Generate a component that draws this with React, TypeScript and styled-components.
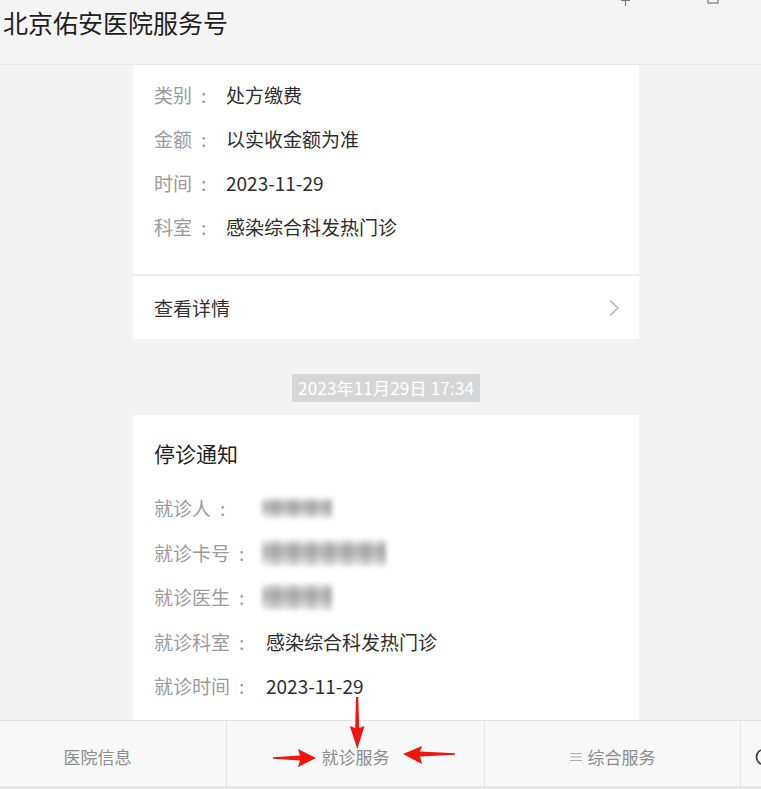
import React from "react";
import styled, { createGlobalStyle } from "styled-components";

const Global = createGlobalStyle`
  html, body { margin: 0; padding: 0; background: #f3f3f3; overflow: hidden; }
  body { font-family: "Noto Sans CJK SC", "Noto Sans", sans-serif; }
  * { box-sizing: border-box; }
`;

const Page = styled.div`
  position: relative;
  width: 761px;
  height: 789px;
  display: flex;
  flex-direction: column;
  background: #f3f3f3;
  overflow: hidden;
`;

const Header = styled.header`
  position: relative;
  flex: 0 0 65px;
  background: #f4f4f4;
  border-bottom: 1px solid #e8e8e8;
  padding-left: 3px;
`;

const Title = styled.h1`
  margin: 0;
  font-size: 25px;
  font-weight: 400;
  line-height: 44px;
  color: #1e1e1e;
`;

const WinIcons = styled.svg`
  position: absolute;
  top: 0;
  right: 20px;
`;

const Content = styled.main`
  flex: 1;
  overflow: hidden;
  display: flex;
  flex-direction: column;
  align-items: flex-start;
  padding-left: 133px;
`;

const Card = styled.section<{ $pad: string }>`
  width: 506px;
  background: #fff;
  padding: ${(p) => p.$pad};
  flex-shrink: 0;
`;

const FieldList = styled.div<{ $pad: string }>`
  padding: ${(p) => p.$pad};
`;

const Field = styled.div<{ $lh: number; $label: number }>`
  display: grid;
  grid-template-columns: ${(p) => p.$label}px 1fr;
  align-items: center;
  height: ${(p) => p.$lh}px;
  line-height: ${(p) => p.$lh}px;
  font-size: 19px;
`;

const Label = styled.span`
  color: #9b9b9b;
  white-space: nowrap;
`;

const Colon = styled.span`
  margin-left: 9px;
`;

const Value = styled.span`
  color: #2e2e2e;
  white-space: nowrap;
`;

const Divider = styled.div`
  height: 2px;
  background: #ececec;
`;

const DetailRow = styled.div`
  height: 63px;
  display: flex;
  align-items: center;
  justify-content: space-between;
  padding: 0 19px 0 21px;
  font-size: 19px;
  color: #333;
`;

const Stamp = styled.div`
  align-self: flex-start;
  margin: 35px 0 13px 159px;
  height: 28px;
  padding: 0 6px;
  background: #d6d6d6;
  color: #fff;
  font-size: 17px;
  line-height: 28px;
  letter-spacing: 0.2px;
  border-radius: 2px;
  flex-shrink: 0;
`;

const NoticeTitle = styled.h2`
  margin: 0 0 17px;
  font-size: 21px;
  font-weight: 400;
  line-height: 32px;
  color: #1f1f1f;
`;

const Blur = styled.div<{ $w: number; $h: number }>`
  width: ${(p) => p.$w}px;
  height: ${(p) => p.$h}px;
  margin-left: -4px;
  filter: blur(2.4px);
  background:
    repeating-linear-gradient(90deg, rgba(0,0,0,0.0) 0 9px, rgba(0,0,0,0.08) 9px 18px),
    linear-gradient(180deg, #ececec 0%, #b3b3b3 35%, #bdbdbd 60%, #ededed 100%);
  border-radius: 2px;
`;

const TabBar = styled.nav`
  flex: 0 0 69px;
  display: flex;
  margin-left: -31px;
  background: #f8f8f8;
  border-top: 1px solid #e2e2e2;
  border-bottom: 3px solid #e6e6e6;
`;

const Tab = styled.div<{ $w: number }>`
  flex: 0 0 ${(p) => p.$w}px;
  display: flex;
  align-items: center;
  justify-content: center;
  gap: 6px;
  padding-top: 6px;
  font-size: 17px;
  color: #8c8c8c;
  border-right: 1px solid #e6e6e6;
  &:last-child { border-right: none; justify-content: flex-start; padding-left: 14px; }
`;

const Marks = styled.svg`
  position: absolute;
  left: 0;
  top: 0;
  pointer-events: none;
`;

const Chevron = () => (
  <svg width="12" height="18" viewBox="0 0 12 18">
    <path d="M2 1.5 L10 9 L2 16.5" fill="none" stroke="#b8b8b8" strokeWidth="1.6" />
  </svg>
);

const MenuIcon = () => (
  <svg width="12" height="12" viewBox="0 0 12 12">
    <path d="M0 2.5h12M0 6h12M0 9.5h12" stroke="#b0b0b0" strokeWidth="1.2" />
  </svg>
);

const bill = [
  ["类别", "处方缴费"],
  ["金额", "以实收金额为准"],
  ["时间", "2023-11-29"],
  ["科室", "感染综合科发热门诊"],
];

type Row = { label: string; value?: string; blur?: [number, number] };
const notice: Row[] = [
  { label: "就诊人", blur: [70, 20] },
  { label: "就诊卡号", blur: [124, 26] },
  { label: "就诊医生", blur: [70, 26] },
  { label: "就诊科室", value: "感染综合科发热门诊" },
  { label: "就诊时间", value: "2023-11-29" },
];

export default function App() {
  return (
    <>
      <Global />
      <Page>
        <Header>
          <Title>北京佑安医院服务号</Title>
          <WinIcons width="120" height="8" viewBox="0 0 120 8">
            <path d="M0 0.5h9M4.5 0v6" stroke="#7a7a7a" strokeWidth="1.2" />
            <rect x="87" y="-6" width="10" height="9" fill="none" stroke="#7a7a7a" strokeWidth="1.2" />
          </WinIcons>
        </Header>
        <Content>
          <Card $pad="0">
            <FieldList $pad="8px 21px 25px">
              {bill.map(([l, v]) => (
                <Field key={l} $lh={44} $label={72}>
                  <Label>
                    {l}
                    <Colon>:</Colon>
                  </Label>
                  <Value>{v}</Value>
                </Field>
              ))}
            </FieldList>
            <Divider />
            <DetailRow>
              <span>查看详情</span>
              <Chevron />
            </DetailRow>
          </Card>
          <Stamp>2023年11月29日 17:34</Stamp>
          <Card $pad="22px 21px 20px">
            <NoticeTitle>停诊通知</NoticeTitle>
            {notice.map((r) => (
              <Field key={r.label} $lh={44.5} $label={112}>
                <Label>
                  {r.label}
                  <Colon>:</Colon>
                </Label>
                {r.blur ? <Blur $w={r.blur[0]} $h={r.blur[1]} /> : <Value>{r.value}</Value>}
              </Field>
            ))}
          </Card>
        </Content>
        <TabBar>
          <Tab $w={258}>医院信息</Tab>
          <Tab $w={258}>就诊服务</Tab>
          <Tab $w={256}>
            <MenuIcon />
            综合服务
          </Tab>
          <Tab $w={60}>
            <svg width="18" height="18" viewBox="0 0 18 18">
              <circle cx="9" cy="9" r="7.5" fill="none" stroke="#444" strokeWidth="1.8" />
            </svg>
          </Tab>
        </TabBar>
        <Marks width="761" height="789" viewBox="0 0 761 789">
          <g fill="#f2140f">
            <polygon points="356,697 358.2,697 359.2,728 364.5,726 357.3,749 349.8,726 355.2,728" />
            <polygon points="273,757.3 273,758.7 300,760.5 298,767 316,758 298,749 300,755.5" />
            <polygon points="455,753.2 455,754.8 420,756.5 422,764 403,754 422,746 420,751.5" />
          </g>
        </Marks>
      </Page>
    </>
  );
}
